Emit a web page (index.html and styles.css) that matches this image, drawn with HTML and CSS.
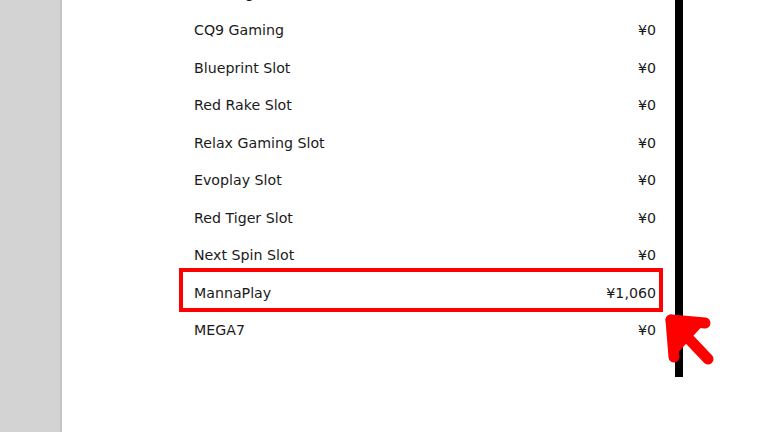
FILE: index.html
```html
<!DOCTYPE html>
<html>
<head>
<meta charset="utf-8">
<link rel="stylesheet" href="styles.css">
</head>
<body>
<div class="page">
  <aside class="side"></aside>
  <main class="main">
    <ul class="list">
      <li class="row"><span>Red Dog Slot</span><span>¥0</span></li>
      <li class="row"><span>CQ9 Gaming</span><span>¥0</span></li>
      <li class="row"><span>Blueprint Slot</span><span>¥0</span></li>
      <li class="row"><span>Red Rake Slot</span><span>¥0</span></li>
      <li class="row"><span>Relax Gaming Slot</span><span>¥0</span></li>
      <li class="row"><span>Evoplay Slot</span><span>¥0</span></li>
      <li class="row"><span>Red Tiger Slot</span><span>¥0</span></li>
      <li class="row"><span>Next Spin Slot</span><span>¥0</span></li>
      <li class="row hl"><span>MannaPlay</span><span>¥1,060</span></li>
      <li class="row"><span>MEGA7</span><span>¥0</span></li>
    </ul>
    <div class="bar"></div>
    <svg class="arrow" width="60" height="60" viewBox="0 0 60 60">
      <g stroke="#ff0000" stroke-width="11" stroke-linecap="round" stroke-linejoin="round" fill="none">
        <line x1="9" y1="9" x2="46" y2="48"/>
        <polyline points="43,12 9,9 12,46"/>
      </g>
      <polygon points="9,9 43,12 12,46" fill="#ff0000"/>
    </svg>
  </main>
</div>
</body>
</html>
```
FILE: styles.css
```css
html, body {
  margin: 0;
  padding: 0;
  background: #fff;
  overflow: hidden;
}
.page {
  display: flex;
  width: 768px;
  height: 432px;
}
.side {
  width: 60px;
  flex: none;
  background: #d3d3d3;
  border-right: 2px solid #c4c4c4;
}
.main {
  position: relative;
  flex: 1;
  display: flex;
  align-items: flex-start;
  padding-left: 121px;
}
.list {
  list-style: none;
  margin: -26.25px 0 0 0;
  padding: 0;
  width: 476px;
  font-family: "DejaVu Sans", Verdana, sans-serif;
  font-size: 14.2px;
  color: #1a1a1a;
}
.row {
  position: relative;
  height: 37.5px;
  display: flex;
  align-items: center;
  justify-content: space-between;
  padding: 0 3px 0 11px;
  box-sizing: border-box;
}
.hl::after {
  content: "";
  position: absolute;
  left: -4px;
  right: -4px;
  top: -5.75px;
  bottom: -0.75px;
  border: 4px solid #ff0000;
}
.bar {
  flex: none;
  width: 8px;
  height: 377px;
  margin-left: 16px;
  background: #000;
}
.arrow {
  position: absolute;
  left: 600px;
  top: 311px;
}
```
